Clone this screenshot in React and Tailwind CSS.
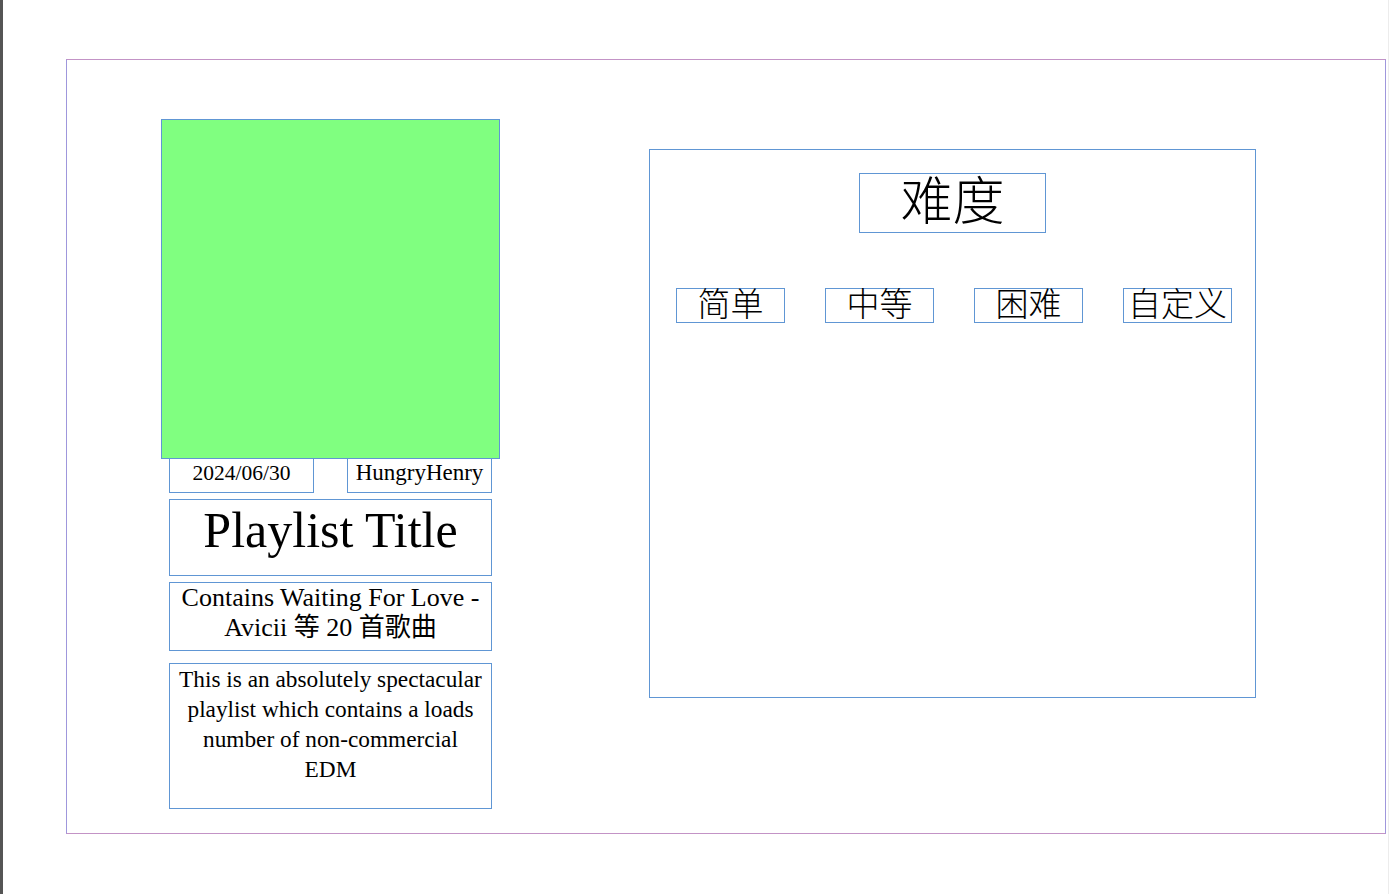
import React from "react";

const levels = ["简单", "中等", "困难", "自定义"];

export default function App() {
  return (
    <div className="flex h-[894px] w-full bg-white text-black font-['Liberation_Serif','Noto_Sans_CJK_SC',serif]">
      {/* left dark edge */}
      <div className="w-[3px] shrink-0 bg-[#555555]" />

      <div className="flex-1 border-r border-[#ececec]">
        {/* outer frame */}
        <div className="ml-[63px] mt-[59px] flex h-[775px] w-[1320px] items-start border-y border-x border-y-[#c393c6] border-x-[#9f97dc]">
          {/* playlist card */}
          <div className="shrink-0 pl-[94px] pt-[59px]">
            <div className="relative z-10 h-[340px] w-[339px] border border-[#6096d4] bg-[#80ff80]" />

            <div className="-mt-[7px] ml-[8px] flex w-[323px] justify-between">
              <div className="flex h-[41px] w-[145px] items-center justify-center border border-[#6096d4] pt-[1px] text-[21.5px]">
                2024/06/30
              </div>
              <div className="flex h-[41px] w-[145px] items-center justify-center border border-[#6096d4] pt-[1px] text-[23px]">
                HungryHenry
              </div>
            </div>

            <div className="ml-[8px] mt-[6px] flex h-[77px] w-[323px] items-center justify-center border border-[#6096d4] pb-[14px] text-[50px]">
              Playlist Title
            </div>

            <div className="ml-[8px] mt-[6px] h-[69px] w-[323px] border border-[#6096d4] px-[4px] text-center text-[26px] leading-[30px]">
              Contains Waiting For Love - Avicii 等 20 首歌曲
            </div>

            <div className="ml-[8px] mt-[12px] h-[146px] w-[323px] border border-[#6096d4] px-[7px] text-center text-[23.3px] leading-[30px]">
              This is an absolutely spectacular playlist which contains a loads number of non-commercial EDM
            </div>
          </div>

          {/* difficulty panel */}
          <div className="ml-[149px] mt-[89px] flex h-[549px] w-[607px] shrink-0 flex-col items-center border border-[#6096d4]">
            <div className="mt-[23px] flex h-[60px] w-[187px] items-center justify-center border border-[#6096d4] text-[52px] leading-none font-light">
              难度
            </div>
            <div className="mt-[55px] flex w-full gap-[40px] pl-[26px]">
              {levels.map((s) => (
                <div
                  key={s}
                  className="flex h-[35px] w-[109px] shrink-0 items-center justify-center border border-[#6096d4] text-[33px] leading-none font-light"
                >
                  {s}
                </div>
              ))}
            </div>
          </div>
        </div>
      </div>
    </div>
  );
}
